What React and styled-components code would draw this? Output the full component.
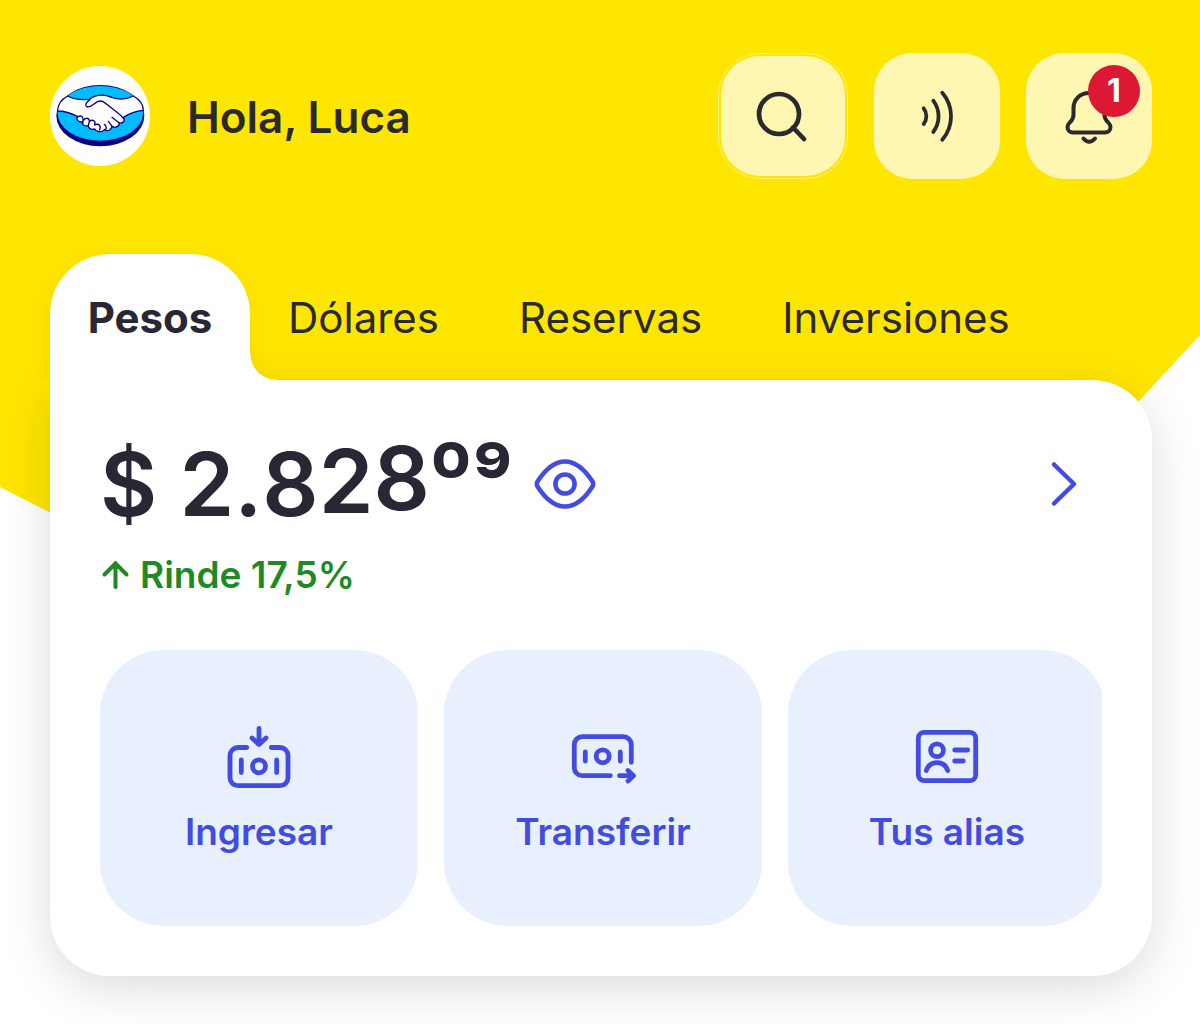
import React, { useState } from "react";
import styled, { createGlobalStyle, css } from "styled-components";

const color = {
  yellow: "#ffe600",
  paleYellow: "#fff6b2",
  ink: "#282834",
  dark: "#2a2a2e",
  indigo: "#434ce0",
  tile: "#e8f0fe",
  green: "#1f8a24",
  red: "#dc1834",
};

const GlobalStyle = createGlobalStyle`
  *, *::before, *::after { box-sizing: border-box; }
  body { margin: 0; background: #fff; font-family: Inter, "Liberation Sans", sans-serif; color: ${color.ink}; }
  button { font: inherit; color: inherit; border: 0; padding: 0; background: none; cursor: pointer; }
`;

const Page = styled.div`
  display: grid;
  min-height: 100vh;
  overflow: hidden;
`;

const Backdrop = styled.div`
  grid-area: 1 / 1;
  height: 560px;
  background: ${color.yellow};
  clip-path: polygon(0 0, 100% 0, 100% 335px, calc(100% - 62px) 402px, 80% 560px, 12% 560px, 49px 512px, 0 487px);
`;

const Content = styled.div`
  grid-area: 1 / 1;
  z-index: 1;
  padding: 53px 48px 48px 50px;
`;

const Header = styled.header`
  display: flex;
  align-items: center;
  margin-bottom: 75px;
`;

const Avatar = styled.div`
  width: 100px;
  height: 100px;
  border-radius: 50%;
  background: #fff;
  svg { display: block; width: 100%; height: 100%; }
`;

const Greeting = styled.h1`
  flex: 1;
  margin: 0;
  padding: 2px 0 0 37px;
  font-size: 44px;
  line-height: 56px;
  font-weight: 600;
  color: ${color.dark};
`;

const HeaderActions = styled.div`
  display: flex;
  gap: 26px;
`;

const HeaderButton = styled.button`
  position: relative;
  display: grid;
  place-items: center;
  width: 126px;
  height: 126px;
  border-radius: 38px;
  background: ${color.paleYellow};
  color: ${color.dark};
  ${(p) =>
    p.$ringed &&
    css`
      width: 130px;
      border: 1px solid #fff07a;
      padding: 2px;
      border-radius: 42px;
      background-clip: content-box;
    `}
`;

const Badge = styled.span`
  position: absolute;
  top: 12px;
  right: 12px;
  width: 52px;
  height: 52px;
  border-radius: 50%;
  background: ${color.red};
  color: #fff;
  font-size: 32px;
  line-height: 52px;
  font-weight: 700;
  text-align: center;
`;

const Icon = styled.svg`
  display: block;
  flex: none;
  overflow: visible;
  fill: none;
  stroke: currentColor;
  stroke-linecap: round;
  stroke-linejoin: round;
`;

const Tabs = styled.div`
  display: flex;
  height: 126px;
`;

const Tab = styled.button`
  padding: 2px 42px 0 38px;
  font-size: 42px;
  line-height: 56px;
  font-weight: 400;
  color: ${color.dark};
  ${(p) =>
    p.$active &&
    css`
      position: relative;
      z-index: 1;
      min-width: 200px;
      padding: 2px 32px 0;
      font-weight: 700;
      color: ${color.ink};
      background: #fff;
      border-radius: 60px 60px 0 0;
      box-shadow: -2px 6px 28px rgba(0, 0, 0, 0.06);
      clip-path: inset(-60px -26px 0 -60px);
      &::after {
        content: "";
        position: absolute;
        left: 100%;
        bottom: 0;
        width: 26px;
        height: 26px;
        background: radial-gradient(circle at 100% 0, transparent 25px, #fff 26px);
      }
    `}
`;

const Card = styled.section`
  padding: 50px;
  background: #fff;
  border-radius: ${(p) => (p.$flushLeft ? "0 60px 60px 60px" : "60px")};
  box-shadow: 0 12px 50px rgba(0, 0, 0, 0.14);
`;

const BalanceRow = styled.div`
  display: flex;
  align-items: center;
  height: 108px;
`;

const Amount = styled.p`
  margin: 0;
  font-size: 88px;
  line-height: 108px;
  font-weight: 600;
  white-space: pre;
`;

const Digit = styled.span`
  line-height: 1;
  vertical-align: ${(p) => p.$step * 3}px;
`;

const Cents = styled.span`
  line-height: 1;
  font-feature-settings: "sups";
`;

const PlainButton = styled.button`
  display: block;
  color: ${color.indigo};
  margin-left: ${(p) => (p.$end ? "auto" : "20px")};
  margin-right: ${(p) => (p.$end ? "24px" : "0")};
`;

const Yield = styled.p`
  display: flex;
  align-items: center;
  gap: 10px;
  margin: 12px 0 50px;
  font-size: 37px;
  line-height: 50px;
  font-weight: 600;
  color: ${color.green};
`;

const Actions = styled.div`
  display: flex;
  gap: 26px;
  overflow: hidden;
`;

const ActionTile = styled.button`
  flex: 0 0 calc((100% - 48px) / 3);
  display: flex;
  flex-direction: column;
  align-items: center;
  gap: 18px;
  height: 276px;
  padding-top: 76px;
  border-radius: 64px;
  background: ${color.tile};
  color: ${color.indigo};
  font-size: 37px;
  line-height: 48px;
  font-weight: 600;
`;

const Handshake = () => (
  <svg viewBox="28 49 300 300" aria-hidden="true">
    <ellipse cx="179" cy="198" rx="132" ry="92" fill="#0a0080" />
    <ellipse cx="179" cy="191" rx="128" ry="82" fill="#00bcff" />
    <g stroke="#0a0080" strokeWidth="4" strokeLinecap="round" strokeLinejoin="round" fill="none">
      <path
        fill="#fff"
        d="M81 139C100 150 125 151 146 149C163 136 187 132 213 143C235 151 259 149 278 139C299 151 308 166 308 182C285 184 266 191 248 203C255 214 246 222 236 220C236 232 222 236 214 230C212 242 201 246 192 240C183 250 166 247 162 238C151 241 142 236 143 228C131 231 122 223 127 216C113 220 104 207 112 201C91 190 72 184 51 184C51 165 61 150 81 139Z"
      />
      <path d="M149 148C139 158 131 165 137 170C149 177 158 162 171 156C184 149 194 160 210 173C225 185 240 195 249 207" />
      <path d="M112 201C121 196 129 201 127 213M127 214C134 202 147 204 146 215C145 221 143 225 143 228M146 215C157 208 166 214 162 226M162 226C174 219 183 230 176 241M214 203L236 220M203 215L215 231M191 224C197 229 199 236 193 240" />
    </g>
  </svg>
);

const SearchIcon = () => (
  <Icon width="64" height="64" viewBox="0 0 64 64" strokeWidth="4.7" aria-hidden="true">
    <circle cx="28" cy="30" r="20" />
    <path d="M42 43.5L53 55" />
  </Icon>
);

const ContactlessIcon = () => (
  <Icon width="64" height="64" viewBox="0 0 64 64" strokeWidth="3.8" aria-hidden="true">
    <path d="M18.7 24.3A13 13 0 0 1 18.7 40M28.3 16.7A26 26 0 0 1 28.3 48M37.3 8.7A36 36 0 0 1 37.3 55.7" />
  </Icon>
);

const BellIcon = () => (
  <Icon width="64" height="64" viewBox="0 0 64 64" strokeWidth="4" aria-hidden="true">
    <path d="M32 9C23 9 16.5 15.5 16.5 24V31C16.5 38 10.5 38 10.5 43C10.5 46.5 13 48.5 16 48.5H48C51 48.5 53.5 46.5 53.5 43C53.5 38 47.5 38 47.5 31V24C47.5 15.5 41 9 32 9Z" />
    <path d="M26.5 54.5Q32 61 38 54.5" />
  </Icon>
);

const EyeIcon = () => (
  <Icon width="64" height="52" viewBox="0 0 64 52" strokeWidth="4.5" aria-hidden="true">
    <path d="M4.5 23.5C10 15 20 3.5 32 3.5S54 15 59.5 23.5Q61 26 59.5 28.5C54 37 44 48.5 32 48.5S10 37 4.5 28.5Q3 26 4.5 23.5Z" />
    <circle cx="32" cy="26" r="9.6" />
  </Icon>
);

const ChevronIcon = () => (
  <Icon width="28" height="48" viewBox="0 0 28 48" strokeWidth="4.5" aria-hidden="true">
    <path d="M4 4.5L24 24L4 43.5" />
  </Icon>
);

const ArrowUpIcon = () => (
  <Icon width="30" height="32" viewBox="0 0 30 32" strokeWidth="4" aria-hidden="true">
    <path d="M15.5 28V4M4.5 15.5L15.5 4.5L26.5 15.5" />
  </Icon>
);

const DepositIcon = () => (
  <Icon width="64" height="64" viewBox="0 0 64 64" strokeWidth="4.8" aria-hidden="true">
    <path d="M19.7 21.5H11A8 8 0 0 0 3 29.5V52A8 8 0 0 0 11 59.7H53A8 8 0 0 0 61 52V29.5A8 8 0 0 0 53 21.5H44.3" />
    <path d="M14.3 34V46.5M49.7 34V46.5M32 2.5V18M25 12L32 18.5L39 12" />
    <circle cx="32" cy="40.3" r="6.5" />
  </Icon>
);

const TransferIcon = () => (
  <Icon width="64" height="64" viewBox="0 0 64 64" strokeWidth="4.8" aria-hidden="true">
    <path d="M60.3 36.3V18.7A8 8 0 0 0 52.3 10.7H11.3A8 8 0 0 0 3.3 18.7V41.7A8 8 0 0 0 11.3 49.7H39.3" />
    <path d="M14.3 26V35M49.3 26V35M48.5 49.7H62M57 44.5L62.5 49.7L57 55" />
    <circle cx="31.7" cy="30.3" r="6.5" />
  </Icon>
);

const AliasIcon = () => (
  <Icon width="64" height="64" viewBox="0 0 64 64" strokeWidth="4.8" aria-hidden="true">
    <rect x="3.3" y="6.3" width="57.4" height="48.4" rx="6" />
    <circle cx="22" cy="24.3" r="6.4" />
    <path d="M11.3 44.5C15 34 29 34 32.7 44.5M39.7 24H52.7M39.7 35H48.3" />
  </Icon>
);

const tabs = ["Pesos", "Dólares", "Reservas", "Inversiones"];

const digits = [
  { char: "2", step: 0 },
  { char: ".", step: 0 },
  { char: "8", step: 0 },
  { char: "2", step: 1 },
  { char: "8", step: 2 },
];

const actions = [
  { label: "Ingresar", Glyph: DepositIcon },
  { label: "Transferir", Glyph: TransferIcon },
  { label: "Tus alias", Glyph: AliasIcon },
];

export default function App() {
  const [active, setActive] = useState("Pesos");
  return (
    <>
      <GlobalStyle />
      <Page>
        <Backdrop />
        <Content>
          <Header>
            <Avatar>
              <Handshake />
            </Avatar>
            <Greeting>Hola, Luca</Greeting>
            <HeaderActions>
              <HeaderButton $ringed aria-label="Buscar">
                <SearchIcon />
              </HeaderButton>
              <HeaderButton aria-label="Pago sin contacto">
                <ContactlessIcon />
              </HeaderButton>
              <HeaderButton aria-label="Notificaciones">
                <BellIcon />
                <Badge>1</Badge>
              </HeaderButton>
            </HeaderActions>
          </Header>
          <main>
            <Tabs role="tablist">
              {tabs.map((name) => (
                <Tab
                  key={name}
                  role="tab"
                  aria-selected={name === active}
                  $active={name === active}
                  onClick={() => setActive(name)}
                >
                  {name}
                </Tab>
              ))}
            </Tabs>
            <Card $flushLeft={active === tabs[0]}>
              <BalanceRow>
                <Amount>
                  {"$ "}
                  {digits.map(({ char, step }, i) => (
                    <Digit key={i} $step={step}>
                      {char}
                    </Digit>
                  ))}
                  <Cents>09</Cents>
                </Amount>
                <PlainButton aria-label="Ocultar saldo">
                  <EyeIcon />
                </PlainButton>
                <PlainButton $end aria-label="Ver detalle">
                  <ChevronIcon />
                </PlainButton>
              </BalanceRow>
              <Yield>
                <ArrowUpIcon />
                Rinde 17,5%
              </Yield>
              <Actions>
                {actions.map(({ label, Glyph }) => (
                  <ActionTile key={label}>
                    <Glyph />
                    {label}
                  </ActionTile>
                ))}
              </Actions>
            </Card>
          </main>
        </Content>
      </Page>
    </>
  );
}
